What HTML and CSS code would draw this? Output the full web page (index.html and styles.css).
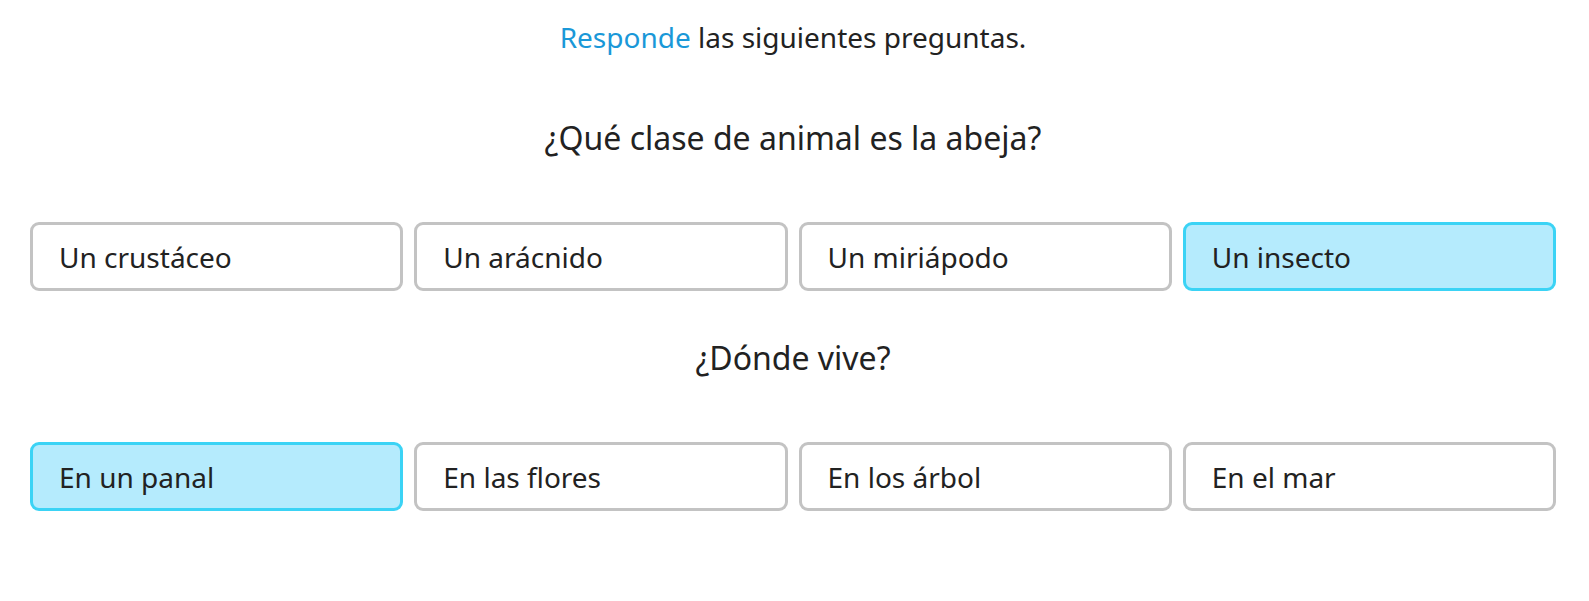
FILE: index.html
```html
<!DOCTYPE html>
<html lang="es">
<head>
<meta charset="utf-8">
<title>Preguntas</title>
<link rel="stylesheet" href="styles.css">
</head>
<body>
<main class="quiz">
  <p class="intro"><span class="accent">Responde</span> las siguientes preguntas.</p>

  <h2 class="question">¿Qué clase de animal es la abeja?</h2>
  <div class="options">
    <button class="option">Un crustáceo</button>
    <button class="option">Un arácnido</button>
    <button class="option">Un miriápodo</button>
    <button class="option selected">Un insecto</button>
  </div>

  <h2 class="question">¿Dónde vive?</h2>
  <div class="options">
    <button class="option selected">En un panal</button>
    <button class="option">En las flores</button>
    <button class="option">En los árbol</button>
    <button class="option">En el mar</button>
  </div>
</main>
</body>
</html>
```

FILE: styles.css
```css
html, body {
  margin: 0;
  padding: 0;
  background: #ffffff;
}

body {
  font-family: "Segoe UI", "Noto Sans", "Open Sans", sans-serif;
  color: #222222;
}

.quiz {
  padding: 0 33px 0 30px;
}

.intro {
  margin: 0;
  height: 76px;
  line-height: 74px;
  text-align: center;
  font-size: 28px;
}

.accent {
  color: #1a98d8;
}

.question {
  margin: 0;
  padding: 32px 0 54px;
  line-height: 60px;
  text-align: center;
  font-size: 32px;
  font-weight: 400;
}

.options {
  display: grid;
  grid-template-columns: repeat(4, 1fr);
  gap: 11px;
  margin-bottom: 5px;
}

.option {
  box-sizing: border-box;
  height: 69px;
  display: flex;
  align-items: center;
  padding: 0 26px;
  border: 3px solid #c3c3c3;
  border-radius: 9px;
  background: #ffffff;
  font-family: inherit;
  font-size: 28px;
  color: #222222;
  text-align: left;
  cursor: pointer;
}

.option.selected {
  background: #b5ebfd;
  border-color: #3bd3f5;
}
```
